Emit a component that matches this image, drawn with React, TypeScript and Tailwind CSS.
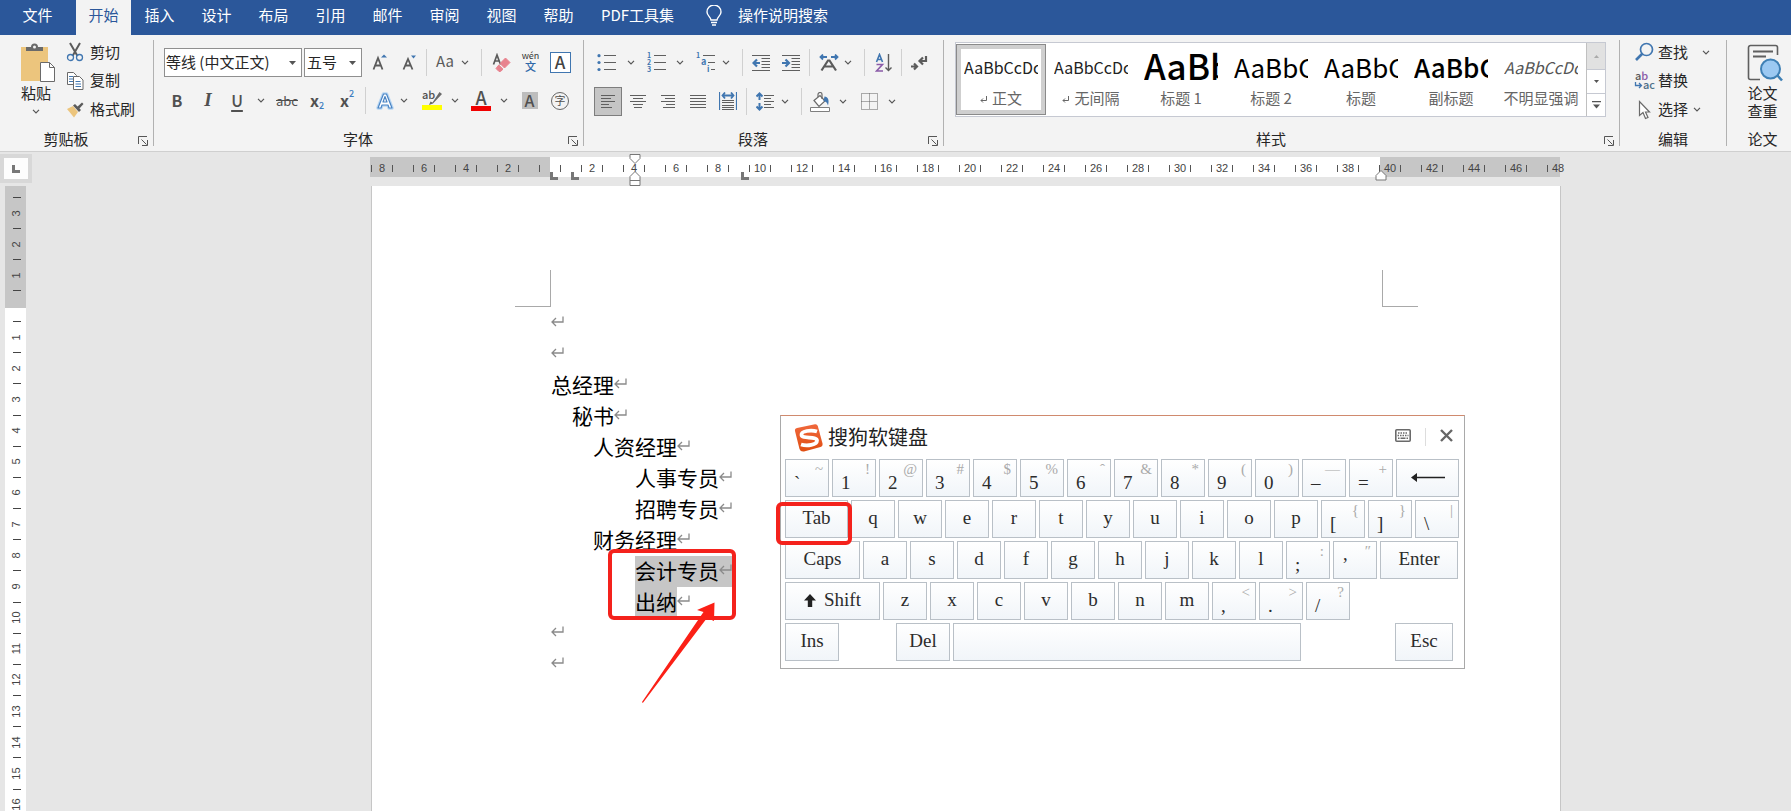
import React from "react";

const TABS = ["插入", "设计", "布局", "引用", "邮件", "审阅", "视图", "帮助"];

function Chevron() {
  return (
    <svg width="8" height="5" viewBox="0 0 8 5" fill="none" stroke="#555" strokeWidth="1.2">
      <path d="M1 .8l3 3 3-3" />
    </svg>
  );
}

function DropArrow() {
  return (
    <svg width="7" height="4" viewBox="0 0 7 4" fill="#555" className="shrink-0">
      <path d="M0 0h7L3.500 4z" />
    </svg>
  );
}

function Tool({ label, className = "", children }: { label: string; className?: string; children: React.ReactNode }) {
  return (
    <button aria-label={label} className={`flex h-[29px] shrink-0 items-center justify-center ${className}`}>
      {children}
    </button>
  );
}

function Sep({ className = "" }: { className?: string }) {
  return <span className={`h-[27px] w-px shrink-0 bg-[#d0d0d0] ${className}`} />;
}

function Group({ title, launcher = false, className = "", children }: { title: string; launcher?: boolean; className?: string; children: React.ReactNode }) {
  return (
    <section aria-label={title} className={`flex flex-col ${className}`}>
      <div className="h-[94px]">{children}</div>
      <div className="flex h-[22px] items-center pb-0.5">
        <span className="flex-1 text-center leading-5">{title}</span>
        {launcher && (
          <button aria-label={`${title}设置`} className="flex w-[21px] justify-center pt-1 pl-px">
            <svg width="10" height="10" viewBox="0 0 10 10" fill="none" stroke="#555">
              <path d="M.5 8V.5H9M3.500 3.500l5 5M9.500 4v5.500H4" />
            </svg>
          </button>
        )}
      </div>
    </section>
  );
}

function GroupLine() {
  return <span className="my-[5px] w-px shrink-0 bg-[#b1b1b1]" />;
}

function Lines({ rows }: { rows: [number, number][] }) {
  return (
    <svg width="18" height="18" viewBox="0 0 18 18" stroke="#5f5f5f" shapeRendering="crispEdges">
      {rows.map(([a, b], i) => (
        <path key={i} d={`M${a} ${2.5 + i * 3}H${b}`} />
      ))}
    </svg>
  );
}

function Clipboard() {
  return (
    <Group title="剪贴板" launcher className="w-[153px] shrink-0">
      <div className="flex">
        <button className="ml-1.5 flex w-[60px] flex-col items-center pt-[8px]">
          <svg width="36" height="40" viewBox="0 0 36 40" className="ml-1">
            <rect x="1" y="4" width="27" height="34" fill="#ecc57d" />
            <path d="M6 8V4h5a3.500 3.500 0 0 1 7 0h5v4z" fill="#6a6a6a" />
            <circle cx="14.500" cy="4" r="1.500" fill="#f3f3f3" />
            <path d="M20.500 19.500h9l5 5v14h-14z" fill="#fff" stroke="#6a6a6a" />
            <path d="M29.500 19.500v5h5" fill="none" stroke="#6a6a6a" />
          </svg>
          <span className="leading-5">粘贴</span>
          <span className="mt-1.5"><Chevron /></span>
        </button>
        <div className="flex flex-col pt-[3px]">
          <button className="flex h-7 items-center gap-[6px]">
            <svg width="18" height="20" viewBox="0 0 18 20" fill="none">
              <path d="M4 1l7.500 13M14 1L6.500 14" stroke="#5b5b5b" strokeWidth="2" />
              <circle cx="4.500" cy="15.500" r="3" stroke="#4076b0" strokeWidth="1.300" />
              <circle cx="13.500" cy="15.500" r="3" stroke="#4076b0" strokeWidth="1.300" />
            </svg>
            剪切
          </button>
          <button className="flex h-[29px] items-center gap-[6px]">
            <svg width="18" height="18" viewBox="0 0 18 18" fill="#fff">
              <path d="M1.500.5h6l3 3v9h-9z" stroke="#6a6a6a" />
              <path d="M3 4.500h4M3 7h5M3 9.500h5" stroke="#4076b0" />
              <path d="M7.500 4.500h6l3.500 3.500v9.500H7.500z" stroke="#6a6a6a" />
              <path d="M9.500 9.500h5M9.500 12h5.500M9.500 14.500h5.500" stroke="#4076b0" />
            </svg>
            复制
          </button>
          <button className="flex h-[29px] items-center gap-[6px]">
            <svg width="18" height="16" viewBox="0 0 18 16">
              <path d="M1 7l6-3 5 6-4 5.500z" fill="#ecc57d" />
              <path d="M7 3.500l2-1.500 6 6-2 2z" fill="#5b5b5b" />
              <path d="M11 5l5-4.500 1.500 1.500-4.500 5z" fill="#5b5b5b" />
            </svg>
            格式刷
          </button>
        </div>
      </div>
    </Group>
  );
}

function FontGroup() {
  return (
    <Group title="字体" launcher className="w-[429px] shrink-0">
      <div className="flex flex-col gap-[9px] pt-[13px] pl-[10px]">
        <div className="flex items-center">
          <label className="flex h-[29px] w-[138px] items-center border border-[#8f8f8f] bg-white pr-[5px]">
            <select aria-label="字体" className="min-w-0 flex-1 appearance-none bg-transparent pb-px pl-px outline-none">
              <option>等线 (中文正文)</option>
            </select>
            <DropArrow />
          </label>
          <label className="ml-0.5 flex h-[29px] w-[58px] items-center border border-[#8f8f8f] bg-white pr-[5px]">
            <select aria-label="字号" className="min-w-0 flex-1 appearance-none bg-transparent pb-px pl-0.5 outline-none">
              <option>五号</option>
            </select>
            <DropArrow />
          </label>
          <Tool label="增大字号" className="w-9">
            <svg width="16" height="18" viewBox="0 0 16 18">
              <path d="M1.500 15.500L6 4l4.500 11.500M3 11.500h6" fill="none" stroke="#5b5b5b" strokeWidth="1.800" />
              <path d="M9 3.500l3-3 3 3z" fill="#4076b0" />
            </svg>
          </Tool>
          <Tool label="减小字号" className="w-6">
            <svg width="16" height="18" viewBox="0 0 16 18">
              <path d="M1.500 15.500L6 5l4.500 10.500M3 11.500h6" fill="none" stroke="#5b5b5b" strokeWidth="1.800" />
              <path d="M9 1.500h5l-2.500 3z" fill="#4076b0" />
            </svg>
          </Tool>
          <Sep className="mx-1" />
          <Tool label="更改大小写" className="w-7 pb-0.5 text-[15px] text-[#5b5b5b]">Aa</Tool>
          <Tool label="大小写选项" className="w-3"><Chevron /></Tool>
          <Sep className="ml-[10px]" />
          <Tool label="清除格式" className="ml-1 w-[30px]">
            <svg width="19" height="20" viewBox="0 0 19 20">
              <path d="M1.500 11.500L5 2l3.500 9.500M3 8h4.500" fill="none" stroke="#5b5b5b" strokeWidth="1.700" />
              <path d="M13.500 5l4.500 4.500-5.500 5.500L8 10.500z" fill="#e8828e" stroke="#e8828e" strokeLinejoin="round" />
              <path d="M6.800 12l4.200 4.200-2.500 2.300H7l-3-3z" fill="#e8828e" stroke="#e8828e" strokeLinejoin="round" />
            </svg>
          </Tool>
          <Tool label="拼音指南" className="w-[29px] flex-col pb-1">
            <span className="text-[9px] leading-[11px] text-[#333]">wén</span>
            <span className="text-[11px] leading-[11px] font-medium text-[#2f68a8]">文</span>
          </Tool>
          <Tool label="字符边框" className="w-[30px]">
            <span className="flex h-[21px] w-[21px] items-center justify-center border border-[#4076b0] bg-white pb-px text-[17px] leading-5 font-medium text-[#444]">A</span>
          </Tool>
        </div>
        <div className="flex items-center text-[#505050]">
          <Tool label="加粗" className="w-[26px] pb-px text-[16px] font-bold">B</Tool>
          <Tool label="倾斜" className="w-9 font-[Liberation_Serif,serif] text-[19px] font-bold italic">I</Tool>
          <Tool label="下划线" className="w-[22px] pb-0.5 text-[16px] font-medium"><span className="underline decoration-[1.5px] underline-offset-3">U</span></Tool>
          <Tool label="下划线选项" className="w-[26px]"><Chevron /></Tool>
          <Tool label="删除线" className="w-[26px] text-[13px] line-through">abc</Tool>
          <Tool label="下标" className="w-[34px] pb-0.5 text-[16px] font-bold">
            x<span className="mt-3 text-[9px] leading-[14px] font-medium text-[#3d7cc0]">2</span>
          </Tool>
          <Tool label="上标" className="w-[26px] pb-0.5 text-[16px] font-bold">
            x<span className="mb-3 text-[9px] leading-[14px] font-medium text-[#3d7cc0]">2</span>
          </Tool>
          <Sep className="ml-[5px]" />
          <Tool label="文本效果" className="ml-2 w-[22px]">
            <svg width="18" height="20" viewBox="0 0 18 20" fill="none" strokeLinejoin="round">
              <path d="M2 17L7.500 3h3L16 17h-3l-1-3H6l-1 3z" stroke="#b9d7f3" strokeWidth="3.500" />
              <path d="M2 17L7.500 3h3L16 17h-3l-1-3H6l-1 3zM7 11h4L9 5.500z" fill="#fff" fillRule="evenodd" stroke="#4a84c4" strokeWidth="1.200" />
            </svg>
          </Tool>
          <Tool label="文本效果选项" className="w-4"><Chevron /></Tool>
          <Tool label="突出显示" className="ml-1.5 w-7">
            <svg width="22" height="22" viewBox="0 0 22 22" className="overflow-visible">
              <text x="1" y="9" fontSize="11" fontWeight="500" fill="#505050" fontFamily="Noto Sans CJK SC, sans-serif">ab</text>
              <path d="M18.500 2l2.500 2L12 13.500 8 15l1.500-3.500 2 1z" fill="#6a6a6a" />
              <path d="M1 15h20v5H1z" fill="#ff0" />
            </svg>
          </Tool>
          <Tool label="突出显示选项" className="w-[18px]"><Chevron /></Tool>
          <Tool label="字体颜色" className="ml-[3px] w-7 flex-col pb-0.5">
            <span className="text-[18px] leading-[18px] font-medium">A</span>
            <span className="h-[5px] w-5 bg-[#f00000]" />
          </Tool>
          <Tool label="字体颜色选项" className="w-[18px]"><Chevron /></Tool>
          <Tool label="字符底纹" className="ml-0.5 w-[29px]">
            <span className="flex h-[17px] w-4 items-center justify-center bg-[#bdbdbd] pb-px text-[16px] leading-4 font-medium">A</span>
          </Tool>
          <Tool label="带圈字符" className="ml-px w-[30px]">
            <span className="flex h-[18px] w-[18px] items-center justify-center rounded-full border border-[#666] pb-px text-[11px] leading-none">字</span>
          </Tool>
        </div>
      </div>
    </Group>
  );
}

function ParagraphGroup() {
  return (
    <Group title="段落" launcher className="w-[359px] shrink-0">
      <div className="flex flex-col gap-[10px] pt-[13px] pl-[10px]">
        <div className="flex items-center">
          <Tool label="项目符号" className="w-[26px]">
            <svg width="20" height="18" viewBox="0 0 20 18">
              <path d="M7 1.500h12M7 8.500h12M7 15.500h12" stroke="#5f5f5f" />
              <circle cx="2" cy="1.700" r="1.600" fill="#4076b0" /><circle cx="2" cy="8.500" r="1.600" fill="#4076b0" /><circle cx="2" cy="15.500" r="1.600" fill="#4076b0" />
            </svg>
          </Tool>
          <Tool label="项目符号选项" className="w-[22px]"><Chevron /></Tool>
          <Tool label="编号" className="w-[30px]">
            <svg width="20" height="20" viewBox="0 0 20 20" className="overflow-visible">
              <path d="M7 2.500h12M7 9.500h12M7 16.500h12" stroke="#5f5f5f" />
              <g fontSize="7" fontWeight="700" fill="#4076b0" fontFamily="Noto Sans CJK SC, sans-serif">
                <text x="0" y="5">1</text><text x="0" y="12">2</text><text x="0" y="19">3</text>
              </g>
            </svg>
          </Tool>
          <Tool label="编号选项" className="w-4"><Chevron /></Tool>
          <Tool label="多级列表" className="ml-1 w-7">
            <svg width="20" height="20" viewBox="0 0 20 20" className="overflow-visible">
              <path d="M7 2.500h12M12 9.500h7M15 16.500h4" stroke="#5f5f5f" />
              <g fontWeight="700" fill="#4076b0" fontFamily="Noto Sans CJK SC, sans-serif">
                <text x="0" y="5" fontSize="7">1</text><text x="5" y="12" fontSize="9">a</text><text x="11" y="19" fontSize="8">i</text>
              </g>
            </svg>
          </Tool>
          <Tool label="多级列表选项" className="w-3"><Chevron /></Tool>
          <Sep className="ml-[10px]" />
          <Tool label="减少缩进量" className="ml-1 w-7">
            <svg width="18" height="18" viewBox="0 0 18 18" fill="none">
              <path d="M0 1.500h18M9.500 4.500H18M9.500 7.500H18M9.500 10.500H18M9.500 13.500H18M0 16.500h18" stroke="#5f5f5f" />
              <path d="M8 9H1.500M5 5.500L1.500 9 5 12.500" stroke="#4076b0" strokeWidth="2.200" />
            </svg>
          </Tool>
          <Tool label="增加缩进量" className="ml-0.5 w-7">
            <svg width="18" height="18" viewBox="0 0 18 18" fill="none">
              <path d="M0 1.500h18M9.500 4.500H18M9.500 7.500H18M9.500 10.500H18M9.500 13.500H18M0 16.500h18" stroke="#5f5f5f" />
              <path d="M0 9h6.500M3.500 5.500L7 9l-3.500 3.500" stroke="#4076b0" strokeWidth="2.200" />
            </svg>
          </Tool>
          <Sep className="ml-1" />
          <Tool label="中文版式" className="ml-1 w-[29px]">
            <svg width="20" height="18" viewBox="0 0 20 18" fill="none">
              <path d="M2.500 16.500L9 6.500h1.500L17 16.500M5.500 12.500h9" stroke="#5b5b5b" strokeWidth="2.200" />
              <path d="M8 3H1.500M4 .5L1.500 3 4 5.500M12 3h6.500M16 .5L18.500 3 16 5.500" stroke="#4076b0" strokeWidth="1.800" />
            </svg>
          </Tool>
          <Tool label="中文版式选项" className="w-[10px]"><Chevron /></Tool>
          <Sep className="ml-[11px]" />
          <Tool label="排序" className="ml-[5px] w-7">
            <svg width="18" height="20" viewBox="0 0 18 20" fill="none">
              <path d="M1.500 9L4.500 1.500 7.500 9M2.500 6.500h4" stroke="#4076b0" strokeWidth="1.600" />
              <path d="M1.500 11.500h6l-6 6.500h6.500" stroke="#8a5ba8" strokeWidth="1.600" />
              <path d="M13.500 1v16.500M10.500 14.500l3 3 3-3" stroke="#5b5b5b" strokeWidth="1.400" />
            </svg>
          </Tool>
          <Sep className="ml-[3px]" />
          <Tool label="显示编辑标记" className="ml-[3px] w-7">
            <svg width="18" height="16" viewBox="0 0 18 16" fill="none" stroke="#5b5b5b" strokeWidth="2.200">
              <path d="M16 1v5H10M13 2.500L9.500 6l3.500 3.500M1 11.500h6M4 8.500l3 3-3 3" />
            </svg>
          </Tool>
        </div>
        <div className="flex items-center">
          <Tool label="左对齐" className="w-7 border border-[#7d7d7d] bg-[#c5c5c5]">
            <Lines rows={[[2, 16], [2, 12], [2, 16], [2, 10], [2, 13]]} />
          </Tool>
          <Tool label="居中" className="ml-0.5 w-7"><Lines rows={[[1, 17], [4, 14], [1, 17], [4, 14], [5, 13]]} /></Tool>
          <Tool label="右对齐" className="ml-0.5 w-7"><Lines rows={[[2, 16], [6, 16], [2, 16], [7, 16], [4, 16]]} /></Tool>
          <Tool label="两端对齐" className="ml-0.5 w-7"><Lines rows={[[1, 17], [1, 17], [1, 17], [1, 17], [1, 17]]} /></Tool>
          <Tool label="分散对齐" className="ml-0.5 w-7">
            <svg width="18" height="19" viewBox="0 0 18 19" fill="none">
              <path d="M.5 0v18M17.500 0v18" stroke="#4076b0" strokeWidth="1.200" />
              <path d="M3 8.500h12M3 10.500h12M3 13.500h12M3 15.500h12M3 17.500h12" stroke="#5f5f5f" />
              <path d="M3.500 3.500h11M6 .5l-2.500 3L6 6.500M12 .5l2.500 3-2.500 3" stroke="#4076b0" strokeWidth="1.800" />
            </svg>
          </Tool>
          <Sep className="ml-1" />
          <Tool label="行距" className="ml-[3px] w-[29px]">
            <svg width="18" height="19" viewBox="0 0 18 19" fill="none">
              <path d="M3.500 1.500V8M3.500 11v6.500M.5 4.500l3-3 3 3M.5 14.500l3 3 3-3" stroke="#4076b0" strokeWidth="2" />
              <path d="M8 3.500h10M8 6.500h7M8 9.500h10M8 12.500h7M8 15.500h10" stroke="#5f5f5f" />
            </svg>
          </Tool>
          <Tool label="行距选项" className="w-3"><Chevron /></Tool>
          <Sep className="ml-[10px]" />
          <Tool label="底纹" className="ml-1 w-7">
            <svg width="20" height="20" viewBox="0 0 20 20" fill="none">
              <path d="M4 8.500l6-5 5 5.500-6 5.500z" fill="#fff" stroke="#6a6a6a" strokeWidth="1.200" />
              <path d="M8 5V2.500a2 2 0 0 1 4 0V7" stroke="#6a6a6a" strokeWidth="1.200" />
              <path d="M14.500 4.500c3.500 0 5 3.500 3.500 9-1-3-2-4-4.500-4.500z" fill="#4076b0" />
              <path d="M.5 15.500h19v4H.5z" fill="#fff" stroke="#7f7f7f" />
            </svg>
          </Tool>
          <Tool label="底纹选项" className="w-[18px]"><Chevron /></Tool>
          <Tool label="边框" className="ml-[3px] w-7">
            <svg width="17" height="17" viewBox="0 0 17 17" fill="none" stroke="#5f5f5f" strokeDasharray="1 1">
              <path d="M.5.5h16v16H.5zM8.500.5v16M.5 8.500h16" />
            </svg>
          </Tool>
          <Tool label="边框选项" className="w-[18px]"><Chevron /></Tool>
        </div>
      </div>
    </Group>
  );
}

const STYLES = [
  { name: "正文", sample: "AaBbCcDc", mark: true, cls: "text-[16px] leading-[38px] text-[#222]" },
  { name: "无间隔", sample: "AaBbCcDc", mark: true, cls: "text-[16px] leading-[38px] text-[#222]" },
  { name: "标题 1", sample: "AaBb", mark: false, cls: "text-[35px] leading-[34px] font-medium text-black" },
  { name: "标题 2", sample: "AaBbC", mark: false, cls: "text-[26px] leading-[38px] text-black" },
  { name: "标题", sample: "AaBbC", mark: false, cls: "text-[26px] leading-[38px] text-black" },
  { name: "副标题", sample: "AaBbC", mark: false, cls: "text-[26px] leading-[38px] font-medium text-black" },
  { name: "不明显强调", sample: "AaBbCcDc", mark: false, cls: "text-[16px] leading-[38px] italic text-[#555]" },
];

function StylesGroup() {
  return (
    <Group title="样式" launcher className="min-w-0 flex-1">
      <div className="mt-[7px] mr-[13px] ml-[11px] flex h-[75px] border border-[#c6c9d2] bg-white">
        <div className="flex min-w-0 flex-1">
          {STYLES.map((s, i) => (
            <button key={s.name} className={`my-px min-w-0 flex-1 border ${i === 0 ? "border-[#8a8a8a]" : "border-transparent"}`}>
              <span className={`flex h-full flex-col border-4 px-[3px] ${i === 0 ? "border-[#cfcfcf]" : "border-transparent"}`}>
                <span className={`-mt-px block h-10 w-full overflow-hidden text-left whitespace-nowrap ${s.cls}`}>{s.sample}</span>
                <span className="flex items-center justify-center gap-[5px] leading-[19px] whitespace-nowrap text-[#666]">
                  {s.mark && (
                    <svg width="7" height="8" viewBox="0 0 7 8" fill="none" stroke="#666" className="mt-1">
                      <path d="M6.500 0v4.500H1M3 2.500l-2 2 2 2" />
                    </svg>
                  )}
                  {s.name}
                </span>
              </span>
            </button>
          ))}
        </div>
        <div className="flex w-[19px] shrink-0 flex-col border-l border-[#c0c0c0]">
          <button aria-label="上一行" className="flex h-[26px] items-center justify-center bg-[#e1e1e1]">
            <svg width="5" height="3" viewBox="0 0 5 3" fill="#aaa"><path d="M0 3h5L2.500 0z" /></svg>
          </button>
          <button aria-label="下一行" className="flex h-[25px] items-center justify-center border-y border-[#c6c9d2]">
            <svg width="5" height="3" viewBox="0 0 5 3" fill="#555"><path d="M0 0h5L2.500 3z" /></svg>
          </button>
          <button aria-label="其他" className="flex flex-1 items-center justify-center">
            <svg width="9" height="8" viewBox="0 0 9 8" fill="#555"><path d="M0 0h9v1.200H0zM1 3.500h7L4.500 7.500z" /></svg>
          </button>
        </div>
      </div>
    </Group>
  );
}

function EditingGroup() {
  return (
    <Group title="编辑" className="w-[106px] shrink-0">
      <div className="flex flex-col pt-[3px] pl-3.5">
        <button className="flex h-7 items-center">
          <svg width="20" height="20" viewBox="0 0 20 20" fill="none" stroke="#4076b0">
            <circle cx="12.500" cy="7.500" r="6" strokeWidth="1.700" /><path d="M8.500 11.500L2 18" strokeWidth="2.600" />
          </svg>
          <span className="ml-1">查找</span>
          <span className="ml-[14px]"><Chevron /></span>
        </button>
        <button className="flex h-[29px] items-center">
          <svg width="20" height="20" viewBox="0 0 20 20" fontFamily="Noto Sans CJK SC, sans-serif" fontSize="11" fontWeight="500" className="overflow-visible">
            <text x="1" y="9" fill="#5b5b5b">a<tspan fill="#8a5ba8">b</tspan></text>
            <text x="9" y="18" fill="#4f7089">ac</text>
            <path d="M1.500 11v3.500H7M5 12l2.500 2.500L5 17" fill="none" stroke="#4076b0" strokeWidth="1.300" />
          </svg>
          <span className="ml-1">替换</span>
        </button>
        <button className="flex h-[29px] items-center">
          <svg width="20" height="20" viewBox="0 0 20 20">
            <path d="M5.500 1.500v14l3.500-3 2.500 6 2.500-1-2.500-5.500h4z" fill="#fff" stroke="#6a6a6a" strokeWidth="1.200" />
          </svg>
          <span className="ml-1">选择</span>
          <span className="ml-[5px]"><Chevron /></span>
        </button>
      </div>
    </Group>
  );
}

function PaperGroup() {
  return (
    <Group title="论文" className="w-16 shrink-0 pl-[7px]">
      <button className="flex w-full flex-col items-center pt-[9px]">
        <svg width="36" height="38" viewBox="0 0 36 38" fill="none" className="ml-1">
          <path d="M13 35.500H3.500a2 2 0 0 1-2-2v-30a2 2 0 0 1 2-2h25a2 2 0 0 1 2 2V11" stroke="#5f5f5f" strokeWidth="1.600" />
          <path d="M6 7.500h20M6 12.500h13" stroke="#5f5f5f" strokeWidth="2" />
          <circle cx="23.500" cy="25" r="9.500" fill="#9cc9f2" stroke="#3f80b5" strokeWidth="2" />
          <path d="M30.500 31.500l4.500 5" stroke="#3f80b5" strokeWidth="2.600" />
        </svg>
        <span className="mt-0.5 leading-[18px]">论文<br />查重</span>
      </button>
    </Group>
  );
}

function TabStop({ className }: { className: string }) {
  return <span className={`absolute top-[15px] h-2 w-2 border-b-[3px] border-l-[3px] border-[#777] ${className}`} />;
}

function HorizontalRuler() {
  const cells = Array.from({ length: 29 }, (_, i) => (i - 4) * 2);
  return (
    <div className="relative mt-[5px] flex h-5 w-[1190px] items-center bg-[linear-gradient(90deg,#c6c6c6_180px,#fff_180px,#fff_1010px,#c6c6c6_1010px)]">
      <div className="-ml-[9px] flex pt-0.5">
        {cells.map((n) => (
          <span key={n} className="flex w-[42px] shrink-0 items-center justify-center font-[Liberation_Sans,sans-serif] text-[11px] leading-5 text-[#444]">
            <span className="h-[7px] w-px bg-[#555]" />
            <span className="flex w-5 justify-center">{n === 0 ? "" : Math.abs(n)}</span>
            <span className={n === 48 ? "w-px" : "h-[7px] w-px bg-[#555]"} />
          </span>
        ))}
      </div>
      <TabStop className="left-[180px]" />
      <TabStop className="left-[201px]" />
      <TabStop className="left-[371px]" />
      <svg width="12" height="33" viewBox="0 0 12 33" fill="#fff" stroke="#777" className="absolute -top-[3px] left-[259px]">
        <path d="M1 .5h10v4L6 9.500 1 4.500zM6 17.500l5 5v9H1v-9zM1 26.500h10" />
      </svg>
      <svg width="12" height="11" viewBox="0 0 12 11" fill="#fff" stroke="#777" className="absolute top-[13px] left-[1005px]">
        <path d="M6 .5l5 5v4.500H1V5.500z" />
      </svg>
    </div>
  );
}

function VerticalCell({ n }: { n: number }) {
  return (
    <span className="flex w-full flex-1 items-center justify-center pl-0.5 font-[Liberation_Sans,sans-serif] text-[11px] text-[#444]">
      <span className="-rotate-90 leading-none">{n}</span>
    </span>
  );
}

function VerticalRuler() {
  return (
    <div className="ml-[5px] flex w-[21px] flex-1 flex-col overflow-hidden bg-white">
      <div className="flex h-[122px] shrink-0 flex-col items-center justify-end bg-[#c6c6c6] pb-[17px]">
        {[3, 2, 1].map((n) => (
          <React.Fragment key={n}>
            <span className="ml-0.5 h-px w-[8px] shrink-0 bg-[#444]" />
            <div className="flex h-[30px] w-full shrink-0"><VerticalCell n={n} /></div>
          </React.Fragment>
        ))}
        <span className="ml-0.5 h-px w-[8px] shrink-0 bg-[#444]" />
      </div>
      <div className="mt-[13px] flex h-[530px] shrink-0 flex-col">
        {Array.from({ length: 17 }, (_, i) => (
          <div key={i} className="flex flex-1 flex-col items-center">
            <span className="ml-0.5 h-px w-[8px] shrink-0 bg-[#444]" />
            <VerticalCell n={i + 1} />
          </div>
        ))}
      </div>
    </div>
  );
}

const PARAGRAPHS = [
  { text: "", cls: "" },
  { text: "", cls: "" },
  { text: "总经理", cls: "" },
  { text: "秘书", cls: "pl-[21px]" },
  { text: "人资经理", cls: "pl-[42px]" },
  { text: "人事专员", cls: "pl-[84px]" },
  { text: "招聘专员", cls: "pl-[84px]" },
  { text: "财务经理", cls: "pl-[42px]" },
  { text: "会计专员", cls: "pl-[84px]", sel: "all" },
  { text: "出纳", cls: "pl-[84px]", sel: "text" },
  { text: "", cls: "" },
  { text: "", cls: "" },
];

function Page() {
  return (
    <main className="mt-[9px] ml-px w-[1190px] flex-1 border-x border-[#c6c6c6] bg-white pt-[84px]">
      <div className="flex justify-between pr-[142px] pl-[143px]">
        <span className="h-[37px] w-9 border-r border-b border-[#a9a9a9]" />
        <span className="h-[37px] w-9 border-b border-l border-[#a9a9a9]" />
      </div>
      <article className="mt-px pl-[179px] text-[21px] leading-[28px] text-black">
        {PARAGRAPHS.map((p, i) => (
          <p key={i} className={`flex h-[31px] ${p.cls}`}>
            <span className={p.sel ? "bg-[#c6c6c6]" : ""}>{p.text}</span>
            <span className={`flex w-4 items-center pb-1 ${p.sel === "all" ? "bg-[#c6c6c6]" : ""}`}>
              <svg width="13" height="11" viewBox="0 0 13 11" fill="none" stroke="#8a8a8a" strokeWidth="1.300">
                <path d="M12 .5v5.500H1.500M5 2L1 6l4 4" />
              </svg>
            </span>
          </p>
        ))}
      </article>
    </main>
  );
}

function Key({ className = "w-11", children, label }: { className?: string; children?: React.ReactNode; label?: string }) {
  return (
    <button aria-label={label} className={`flex h-[38px] shrink-0 items-center justify-center border border-[#b9c0c7] bg-linear-to-b from-white to-[#f1f5f9] pb-px ${className}`}>
      {children}
    </button>
  );
}

function DualKey({ main, alt }: { main: string; alt: string }) {
  return (
    <button className="flex h-[38px] w-11 shrink-0 justify-between border border-[#b9c0c7] bg-linear-to-b from-white to-[#f1f5f9] pr-[5px] pb-px pl-2">
      <span className="self-end leading-6">{main}</span>
      <span className="self-start text-[15px] leading-[18px] text-[#aaa]">{alt}</span>
    </button>
  );
}

const NUMBER_ROW: [string, string][] = [["`", "~"], ["1", "!"], ["2", "@"], ["3", "#"], ["4", "$"], ["5", "%"], ["6", "ˆ"], ["7", "&"], ["8", "*"], ["9", "("], ["0", ")"], ["–", "—"], ["=", "+"]];

function SoftKeyboard() {
  return (
    <section aria-label="搜狗软键盘" className="absolute top-[415px] left-[780px] w-[685px] border border-t-[#d08a6e] border-r-[#a9a9a9] border-b-[#a9a9a9] border-l-[#a9a9a9] bg-white pb-[7px] pl-1">
      <header className="flex h-[43px] items-center pr-[11px] pb-0.5 pl-[9px] text-[20px] text-[#222]">
        <svg width="30" height="30" viewBox="0 0 30 30" fill="none" className="mt-0.5">
          <defs>
            <linearGradient id="logo" x1="0" y1="0" x2="0" y2="1"><stop offset="0" stopColor="#f0683c" /><stop offset="1" stopColor="#e04e12" /></linearGradient>
          </defs>
          <path d="M3 5L21 1.200Q23 .8 23.800 3L28.500 20.500Q29 23 26.500 24L10 28.500Q6.500 29 5.500 26L1 8Q.5 5.600 3 5z" fill="url(#logo)" />
          <path d="M23 8.500C17 6.500 7 8 7.500 12C8 16 23 13 23 17.500C23 22 13 23.500 7 21.500" stroke="#fff" strokeWidth="3.800" />
        </svg>
        <h2 className="ml-1 flex-1">搜狗软键盘</h2>
        <button aria-label="键盘类型" className="mb-0.5">
          <svg width="16" height="13" viewBox="0 0 16 13" fill="none">
            <rect x=".8" y=".8" width="14.400" height="11.400" rx="1" fill="#fff" stroke="#6a6a6a" strokeWidth="1.600" />
            <path d="M3 4h10M2.500 6.500h11" stroke="#6a6a6a" strokeWidth="1.500" strokeDasharray="1.500 1" />
            <path d="M3 9.300h1.500M5.500 9.300h5M11.500 9.300H13" stroke="#6a6a6a" strokeWidth="1.500" />
          </svg>
        </button>
        <span className="mx-[14px] h-[18px] w-px bg-[#ddd]" />
        <button aria-label="关闭" className="mb-0.5">
          <svg width="13" height="13" viewBox="0 0 13 13" stroke="#666" strokeWidth="2.400"><path d="M1 1l11 11M12 1L1 12" /></svg>
        </button>
      </header>
      <div className="flex flex-col gap-[3px] font-[Liberation_Serif,serif] text-[19px] text-[#2c2c2c]">
        <div className="flex gap-[3px]">
          {NUMBER_ROW.map(([m, a]) => <DualKey key={m} main={m} alt={a} />)}
          <Key className="w-[63px]" label="退格">
            <svg width="34" height="9" viewBox="0 0 34 9" fill="#222"><path d="M0 4.500L6 0v3.700h28v1.500H6V9z" /></svg>
          </Key>
        </div>
        <div className="flex gap-[3px]">
          <Key className="w-[63px]">Tab</Key>
          {"qwertyuiop".split("").map((c) => <Key key={c}>{c}</Key>)}
          <DualKey main="[" alt="{" />
          <DualKey main="]" alt="}" />
          <DualKey main="\" alt="|" />
        </div>
        <div className="flex gap-[3px]">
          <Key className="w-[75px]">Caps</Key>
          {"asdfghjkl".split("").map((c) => <Key key={c}>{c}</Key>)}
          <DualKey main=";" alt=":" />
          <DualKey main="’" alt="″" />
          <Key className="w-[78px]">Enter</Key>
        </div>
        <div className="flex gap-[3px]">
          <Key className="w-[95px] gap-2">
            <svg width="12" height="13" viewBox="0 0 12 13" fill="#222"><path d="M6 0l6 6.500H8.200V13H3.800V6.500H0z" /></svg>
            Shift
          </Key>
          {"zxcvbnm".split("").map((c) => <Key key={c}>{c}</Key>)}
          <DualKey main="," alt="<" />
          <DualKey main="." alt=">" />
          <DualKey main="/" alt="?" />
        </div>
        <div className="flex gap-[3px]">
          <Key className="w-[54px]">Ins</Key>
          <Key className="ml-[54px] w-[54px]">Del</Key>
          <Key className="w-[348px]" label="空格" />
          <Key className="ml-[91px] w-[58px]">Esc</Key>
        </div>
      </div>
    </section>
  );
}

export default function App() {
  return (
    <div className="relative flex h-screen flex-col overflow-hidden bg-[#e6e6e6] font-[Noto_Sans_CJK_SC,sans-serif] text-[15px] text-[#262626]">
      <nav className="flex h-[35px] shrink-0 bg-[#2b579a] text-white">
        <button className="w-[75px] pb-[5px]">文件</button>
        <button className="ml-px w-[55px] bg-[#f3f3f3] pb-[5px] text-[#2b579a]">开始</button>
        {TABS.map((t) => <button key={t} className="w-[57px] pb-[5px]">{t}</button>)}
        <button className="px-[14px] pb-[5px]">PDF工具集</button>
        <button className="ml-[18px] flex items-center gap-4 pb-[5px]">
          <svg width="16" height="21" viewBox="0 0 16 21" fill="none" stroke="#fff" strokeWidth="1.400">
            <path d="M5 15c0-3-4-4-4-8a7 7 0 0 1 14 0c0 4-4 5-4 8zM5 17.500h6M6 20h4" />
          </svg>
          操作说明搜索
        </button>
      </nav>
      <div className="flex h-[117px] shrink-0 border-b border-[#cfcfcf] bg-[#f3f3f3]">
        <Clipboard />
        <GroupLine />
        <FontGroup />
        <GroupLine />
        <ParagraphGroup />
        <GroupLine />
        <StylesGroup />
        <GroupLine />
        <EditingGroup />
        <GroupLine />
        <PaperGroup />
      </div>
      <div className="flex min-h-0 flex-1">
        <div className="flex w-8 shrink-0 flex-col">
          <button aria-label="制表符类型" className="mt-0.5 mb-[3px] flex h-[29px] shrink-0 items-center justify-center border-4 border-[#d8d8d8] bg-[#fdfdfd]">
            <span className="h-2 w-2 border-b-[3px] border-l-[3px] border-[#777]" />
          </button>
          <VerticalRuler />
        </div>
        <div className="flex flex-1 flex-col pl-[338px]">
          <HorizontalRuler />
          <Page />
        </div>
      </div>
      <SoftKeyboard />
      <span className="absolute top-[549px] left-[608px] h-[71px] w-[128px] rounded-md border-4 border-[#f4221c]" />
      <span className="absolute top-[502px] left-[776px] h-[43px] w-[76px] rounded-md border-4 border-[#f4221c]" />
      <svg width="76" height="104" viewBox="0 0 76 104" fill="#fb2016" className="absolute top-[601px] left-[640px]">
        <path d="M74.500 1.500L57 9l6.500 2L2 101l.8 1L67 17l7 3z" />
      </svg>
    </div>
  );
}
